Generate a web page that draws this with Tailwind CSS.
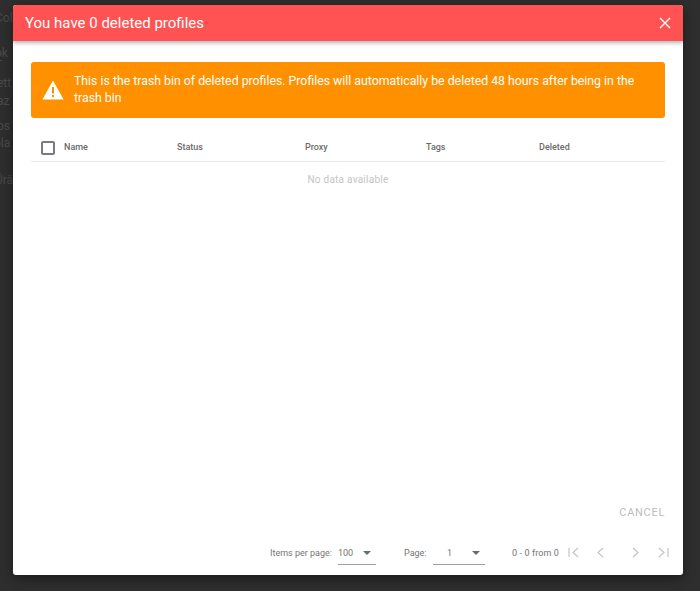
<!DOCTYPE html>
<html><head><meta charset="utf-8"><script src="https://cdn.jsdelivr.net/npm/@tailwindcss/browser@4"></script></head>
<body class="m-0 p-0">
<div class="relative w-[700px] h-[591px] overflow-hidden bg-[#2e2e2e] font-['Roboto',sans-serif]">
  <div class="absolute left-0 top-0 w-[13px] h-full overflow-hidden text-[12px] leading-none text-[#4a4a4a]">
    <span class="absolute left-[-5px] top-[12px]">Col</span>
    <span class="absolute left-[-5px] top-[47px]">ok T</span>
    <span class="absolute left-[-3px] top-[77px]">ett</span>
    <span class="absolute left-[-3px] top-[95px]">az</span>
    <span class="absolute left-[-3px] top-[120px]">os</span>
    <span class="absolute left-[-6px] top-[137px]">ola</span>
    <span class="absolute left-[-5px] top-[174px]">Ürä</span>
  </div>
  <div class="absolute left-[13px] top-[5px] w-[670px] h-[570px] flex flex-col bg-white rounded-[3px] overflow-hidden shadow-[0_4px_12px_rgba(0,0,0,0.4)]">
    <header class="h-9 shrink-0 flex items-center justify-between pl-3 pr-[11px] bg-[#ff5252] text-white shadow-[0_2px_4px_rgba(0,0,0,0.3)] z-10">
      <h1 class="text-[15px] font-normal">You have 0 deleted profiles</h1>
      <svg class="w-[14px] h-[14px]" viewBox="0 0 14 14" fill="none" stroke="white" stroke-width="1.4"><path d="M2 2 L12 12 M12 2 L2 12"/></svg>
    </header>
    <div class="flex-1 flex flex-col px-[18px] pt-[21px] min-h-0">
      <div class="h-[56px] shrink-0 flex items-center gap-[10px] pl-[11px] pr-6 bg-[#ff9100] rounded-[3px] text-white">
        <svg class="w-[22px] h-[20px] shrink-0" viewBox="0 0 22 20"><path fill-rule="evenodd" fill="white" d="M11 0.5 L21.6 19.5 L0.4 19.5 Z M10 7 L10 13.5 L12 13.5 L12 7 Z M10 15 L10 17 L12 17 L12 15 Z"/></svg>
        <p class="text-[12.3px] leading-[17px]">This is the trash bin of deleted profiles. Profiles will automatically be deleted 48 hours after being in the trash bin</p>
      </div>
      <div class="mt-[14px] h-[30px] shrink-0 flex items-center pt-[3px] border-b border-[#e8e8e8] text-[9px] font-medium text-[#6b6b6b]">
        <span class="ml-[10px] w-[14px] h-[14px] border-2 border-[#7a7a85] rounded-[2px] shrink-0"></span>
        <span class="ml-[9px] w-[113px]">Name</span>
        <span class="w-[128px]">Status</span>
        <span class="w-[121px]">Proxy</span>
        <span class="w-[113px]">Tags</span>
        <span>Deleted</span>
      </div>
      <p class="mt-3 text-center text-[10px] leading-[12px] tracking-[0.25px] text-[#c4c4c4]">No data available</p>
      <div class="mt-auto flex justify-end pb-[15px]">
        <span class="text-[11px] leading-[12px] tracking-[0.7px] text-[#bdbdbd]">CANCEL</span>
      </div>
      <div class="h-[41px] pt-[11px] shrink-0 flex items-start text-[9px] leading-[12px] text-[#757575] -mx-[18px]">
        <span class="ml-[257px] mt-[2px] w-[62px] whitespace-nowrap">Items per page:</span>
        <div class="ml-[6px] w-[38px] h-[20px] flex items-center justify-between border-b border-[#9e9e9e] pb-[3px]">
          <span>100</span>
          <svg class="w-[8px] h-[4px] mr-[5px]" viewBox="0 0 8 4"><path d="M0 0 H8 L4 4 Z" fill="#6b6b6b"/></svg>
        </div>
        <span class="ml-7 mt-[2px] w-[22px]">Page:</span>
        <div class="ml-[7px] w-[52px] h-[20px] flex items-center justify-between border-b border-[#9e9e9e] pb-[3px] pl-[14px] pr-[5px]">
          <span>1</span>
          <svg class="w-[8px] h-[4px]" viewBox="0 0 8 4"><path d="M0 0 H8 L4 4 Z" fill="#6b6b6b"/></svg>
        </div>
        <span class="ml-[27px] mt-[2px] w-[48px] whitespace-nowrap tracking-[0.1px]">0 - 0 from 0</span>
        <div class="ml-[8px] mt-[2px] flex items-center">
          <svg class="w-[11px] h-[11px]" viewBox="0 0 11 11" fill="none" stroke="#c4c4c4" stroke-width="1.2"><path d="M1 1V10M10 1L5 5.5L10 10"/></svg>
          <svg class="w-[8px] h-[11px] ml-[17px]" viewBox="0 0 8 11" fill="none" stroke="#c4c4c4" stroke-width="1.2"><path d="M7 1L2 5.5L7 10"/></svg>
          <svg class="w-[8px] h-[11px] ml-[28px]" viewBox="0 0 8 11" fill="none" stroke="#c4c4c4" stroke-width="1.2"><path d="M1 1L6 5.5L1 10"/></svg>
          <svg class="w-[11px] h-[11px] ml-[18px]" viewBox="0 0 11 11" fill="none" stroke="#c4c4c4" stroke-width="1.2"><path d="M1 1L6 5.5L1 10M10 1V10"/></svg>
        </div>
      </div>
    </div>
  </div>
</div>
</body></html>
